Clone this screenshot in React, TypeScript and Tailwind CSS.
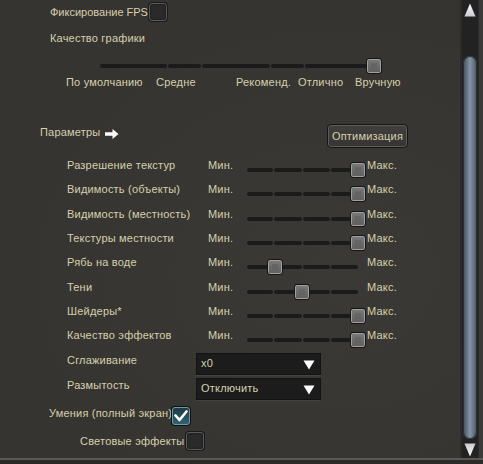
import React from "react";

const TXT = "text-[#d6d0ad]";

function Thumb({ left, top }: { left: number; top: string }) {
  return (
    <div
      className={`absolute ${top} w-[16px] h-[16px] rounded-[3px] border border-[#151515] bg-gradient-to-b from-[#7a7a7a] to-[#5e5e5e] shadow-[inset_0_0_0_1px_#a2a2a2]`}
      style={{ left }}
    >
      <div className="m-[4px] w-[6px] h-[6px] bg-[#5f5f5f] opacity-60" />
    </div>
  );
}

function Track({ widths }: { widths: number[] }) {
  return (
    <div className="flex gap-[1px]">
      {widths.map((w, i) => (
        <div key={i} className="h-[4px] rounded-[2px] bg-[#1b1b1b]" style={{ width: w }} />
      ))}
    </div>
  );
}

function Param({ label, pos }: { label: string; pos: number }) {
  return (
    <div className="flex items-center h-[24.3px] pl-[67px]">
      <div className="w-[141px] whitespace-nowrap">{label}</div>
      <div className="w-[39px]">Мин.</div>
      <div className="relative w-[120px] h-full flex items-center pt-[10px]">
        <Track widths={[26, 28, 27, 27]} />
        <Thumb left={pos} top="top-[calc(50%-3px)]" />
      </div>
      <div>Макс.</div>
    </div>
  );
}

function Box({ checked }: { checked?: boolean }) {
  if (checked) {
    return (
      <div className="shrink-0 w-[18px] h-[18px] rounded-[3px] border border-[#6d9aa8] bg-gradient-to-b from-[#1d3a44] to-[#2f6270] flex items-center justify-center shadow-[0_0_0_1px_#111]">
        <svg width="14" height="12" viewBox="0 0 14 12">
          <path d="M1.5 5.5 L5.5 10 L12.5 1.5" fill="none" stroke="#ffffff" strokeWidth="2.6" strokeLinecap="round" strokeLinejoin="round" />
        </svg>
      </div>
    );
  }
  return (
    <div className="shrink-0 w-[18px] h-[18px] rounded-[3px] border border-[#5a5a5a] bg-[#2a2a2a] shadow-[0_0_0_1px_#1a1a1a,inset_0_0_2px_#111]" />
  );
}

function Dropdown({ value }: { value: string }) {
  return (
    <div className="w-[125px] h-[22px] bg-[#1c1c1c] border border-[#131313] shadow-[0_1px_0_#454341] flex items-start justify-between pl-[4px] pr-[5px] pt-[1px]">
      <span>{value}</span>
      <svg width="12" height="10" viewBox="0 0 12 10" className="mt-[5px]">
        <polygon points="0.5,0.5 11.5,0.5 6,9.5" fill="#ffffff" />
      </svg>
    </div>
  );
}

export default function App() {
  return (
    <div
      className={`w-[483px] h-[464px] overflow-hidden flex flex-col bg-[#383633] ${TXT} text-[11px] leading-[16px] tracking-[0.2px]`}
      style={{ fontFamily: '"Liberation Sans", Arial, sans-serif' }}
    >
      <div className="flex h-[458px] bg-[radial-gradient(ellipse_at_70%_60%,#3b3935_0%,#363431_70%)]">
        {/* content */}
        <div className="w-[460px] flex flex-col">
          {/* FPS */}
          <div className="h-[23px] flex items-center pl-[50px]">
            <span className="w-[99px] whitespace-nowrap tracking-normal">Фиксирование FPS</span>
            <Box />
          </div>
          <div className="h-[30px] flex items-center pl-[50px]">Качество графики</div>
          {/* quality slider */}
          <div className="relative mt-[5px] h-[16px] flex items-center pl-[100px]">
            <Track widths={[67, 33, 68, 33, 66]} />
            <Thumb left={366} top="top-0" />
          </div>
          <div className="h-[16px] flex pl-[66px] whitespace-nowrap">
            <div className="w-[90px]">По умолчанию</div>
            <div className="w-[80px]">Средне</div>
            <div className="w-[62px]">Рекоменд.</div>
            <div className="w-[57px]">Отлично</div>
            <div>Вручную</div>
          </div>
          {/* Параметры header */}
          <div className="mt-[34px] h-[24px] flex items-start pl-[40px]">
            <div className="w-[65px] h-[16px]">Параметры</div>
            <svg width="14" height="10" viewBox="0 0 14 10" className="mt-[5px]">
              <path d="M0 3.2 H7.5 V0 L13.5 5 L7.5 10 V6.8 H0 Z" fill="#ffffff" />
            </svg>
            <div className="ml-[208px] w-[81px] h-[24px] rounded-[4px] border border-[#161616] bg-gradient-to-b from-[#42403d] to-[#363432] shadow-[inset_0_0_0_1px_#5e5c58] flex items-center justify-center">
              Оптимизация
            </div>
          </div>
          {/* params */}
          <div className="mt-[5px] flex flex-col">
            <Param label="Разрешение текстур" pos={103} />
            <Param label="Видимость (объекты)" pos={103} />
            <Param label="Видимость (местность)" pos={103} />
            <Param label="Текстуры местности" pos={103} />
            <Param label="Рябь на воде" pos={20} />
            <Param label="Тени" pos={47} />
            <Param label="Шейдеры*" pos={103} />
            <Param label="Качество эффектов" pos={103} />
          </div>
          {/* dropdowns */}
          <div className="mt-[6px] h-[22px] flex items-start pl-[67px]">
            <div className="w-[129px] -mt-[1px]">Сглаживание</div>
            <Dropdown value="x0" />
          </div>
          <div className="mt-[3px] h-[22px] flex items-start pl-[67px]">
            <div className="w-[129px] -mt-[1px]">Размытость</div>
            <Dropdown value="Отключить" />
          </div>
          {/* checkboxes */}
          <div className="mt-[7px] h-[18px] flex items-start pl-[49px]">
            <div className="w-[123px] leading-[12px] whitespace-nowrap">Умения (полный экран)</div>
            <Box checked />
          </div>
          <div className="mt-[7px] h-[18px] flex items-center pl-[80px]">
            <div className="w-[106px] whitespace-nowrap">Световые эффекты</div>
            <Box />
          </div>
        </div>
        {/* scrollbar */}
        <div className="w-[2px] bg-[#2c2b2a]" />
        <div className="w-[16px] bg-[#222222] flex flex-col items-center">
          <svg width="12" height="14" viewBox="0 0 12 14" className="mt-[3px]">
            <defs>
              <linearGradient id="ua" x1="0" y1="0" x2="0" y2="1">
                <stop offset="0" stopColor="#ffffff" />
                <stop offset="1" stopColor="#c9ccd0" />
              </linearGradient>
            </defs>
            <polygon points="6,0.5 11.5,13.5 0.5,13.5" fill="url(#ua)" />
          </svg>
          <div className="mt-[39px] w-[14px] h-[383px] rounded-[7px] bg-gradient-to-r from-[#434c57] via-[#8494a6] to-[#4a535e] shadow-[inset_0_0_0_1px_#2a3038]" />
          <svg width="12" height="14" viewBox="0 0 12 14" className="mt-[4px]">
            <defs>
              <linearGradient id="da" x1="0" y1="0" x2="0" y2="1">
                <stop offset="0" stopColor="#c9ccd0" />
                <stop offset="1" stopColor="#ffffff" />
              </linearGradient>
            </defs>
            <polygon points="0.5,0.5 11.5,0.5 6,13.5" fill="url(#da)" />
          </svg>
        </div>
        <div className="flex-1 bg-[#3b3a38] border-l border-[#2a2a2a]" />
      </div>
      <div className="h-[6px] border-t-2 border-[#5a5956] bg-[#2b2a29]" />
    </div>
  );
}
